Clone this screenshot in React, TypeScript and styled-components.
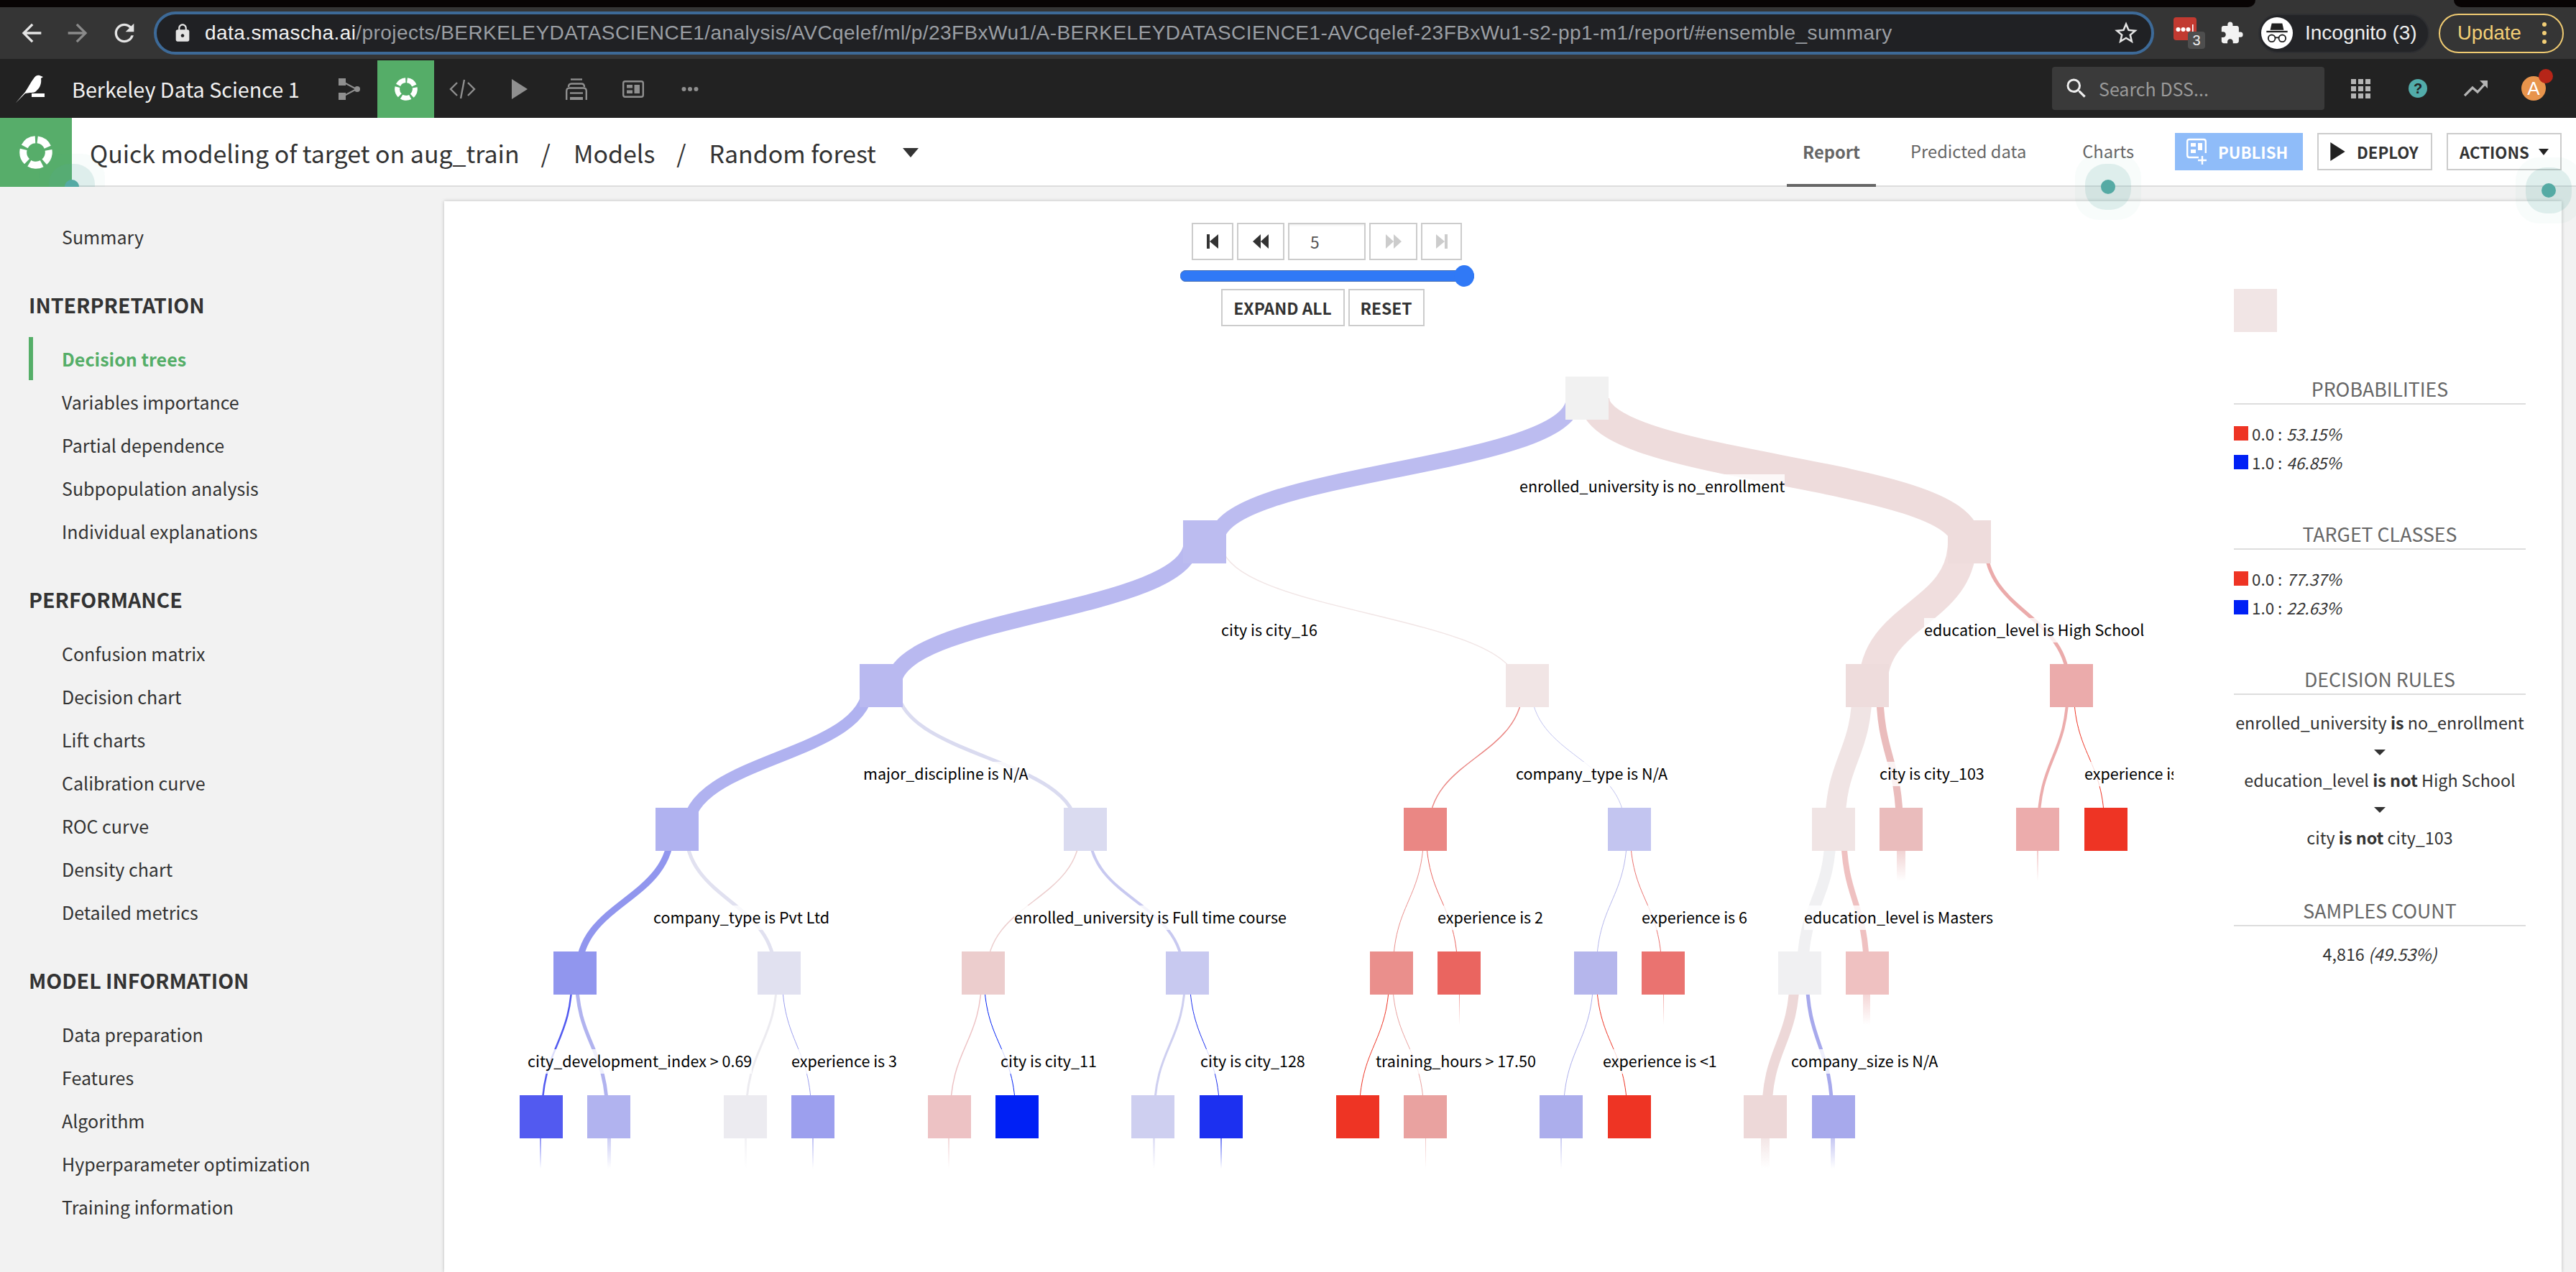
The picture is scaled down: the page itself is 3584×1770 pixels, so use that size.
import React from 'react';
import styled, { createGlobalStyle } from 'styled-components';
import { MdArrowBack, MdArrowForward, MdRefresh, MdLock, MdStarBorder, MdExtension, MdSearch } from 'react-icons/md';

const SANS = `"Noto Sans CJK SC", "Noto Sans", sans-serif`;
const CHROME = `"Liberation Sans", Arial, sans-serif`;

// the tree is a free canvas, coordinates below are page coordinates minus this origin
const ORIGIN_X = 618;
const ORIGIN_Y = 280;
const LEVEL_Y = [524, 724, 924, 1124, 1324, 1524];

const GlobalStyle = createGlobalStyle`
  html, body {
    margin: 0;
    padding: 0;
    width: 3584px;
    height: 1770px;
    overflow: hidden;
    background: #f2f2f2;
  }
  * { box-sizing: border-box; }
`;

const Page = styled.div`
  width: 3584px;
  height: 1770px;
  display: flex;
  flex-direction: column;
  font-family: ${SANS};
  overflow: hidden;
`;

/* browser chrome */
const TabStrip = styled.div`
  height: 10px;
  background: #353535;
  display: flex;
  justify-content: space-between;
`;

const TabGap = styled.div<{ $side: 'left' | 'right' }>`
  background: #080404;
  width: ${p => (p.$side === 'left' ? '3138px' : '170px')};
  border-radius: ${p => (p.$side === 'left' ? '0 0 10px 0' : '0 0 0 10px')};
`;

const Toolbar = styled.div`
  height: 72px;
  background: #353535;
  display: flex;
  align-items: center;
  padding-left: 24px;
  color: #e6e6e6;
`;

const ToolIcon = styled.span<{ $dim?: boolean; $mr: number }>`
  display: flex;
  margin-right: ${p => p.$mr}px;
  color: ${p => (p.$dim ? '#8a8a8a' : '#e4e4e4')};
`;

const UrlBar = styled.div`
  width: 2783px;
  height: 60px;
  border: 4px solid #3d6a98;
  border-radius: 30px;
  background: #202124;
  display: flex;
  align-items: center;
  padding: 0 16px 0 22px;
  margin-right: 27px;
  color: #e4e4e4;
`;

const UrlText = styled.div`
  flex: 1;
  margin-left: 17px;
  font-family: ${CHROME};
  font-size: 28px;
  letter-spacing: 0.43px;
  white-space: nowrap;
  color: #9a9ea3;

  b {
    font-weight: 400;
    color: #f1f1f1;
  }
`;

const ExtBox = styled.div`
  position: relative;
  width: 32px;
  height: 32px;
  margin: -12px 32px 0 0;
  border-radius: 4px;
  background: #c23a31;
  display: flex;
  align-items: center;
  padding-left: 3px;
`;

const ExtBadge = styled.span`
  position: absolute;
  left: 20px;
  top: 20px;
  width: 24px;
  height: 24px;
  border-radius: 4px;
  background: #4e4e4e;
  color: #eee;
  font: 400 20px/24px ${CHROME};
  text-align: center;
`;

const IncognitoPill = styled.div`
  width: 238px;
  height: 55px;
  margin: 0 13px 0 20px;
  border-radius: 28px;
  background: #232427;
  border: 2px solid #2e2f32;
  display: flex;
  align-items: center;
  padding-left: 2px;
  gap: 17px;
  font: 400 28px ${CHROME};
  color: #eee;
  white-space: nowrap;
`;

const UpdatePill = styled.div`
  width: 174px;
  height: 55px;
  border-radius: 28px;
  border: 2px solid #f0cb72;
  display: flex;
  align-items: center;
  padding: 0 22px 0 24px;
  justify-content: space-between;
  font: 400 27.5px ${CHROME};
  color: #f3cf76;
`;

const KebabDots = styled.span`
  display: flex;
  flex-direction: column;
  gap: 6px;

  i {
    width: 6px;
    height: 6px;
    border-radius: 50%;
    background: #f3cf76;
  }
`;

/* app nav */
const NavBar = styled.div`
  height: 82px;
  background: #222;
  display: flex;
  align-items: center;
  padding-right: 42px;
`;

const Brand = styled.div`
  width: 446px;
  display: flex;
  align-items: center;
  padding-left: 20px;
  color: #f2f2f2;
  font-size: 28.75px;
  white-space: nowrap;
  gap: 38px;
`;

const NavTab = styled.div<{ $active?: boolean }>`
  width: 79px;
  height: 80px;
  align-self: flex-end;
  display: flex;
  align-items: center;
  justify-content: center;
  background: ${p => (p.$active ? '#55ad68' : 'transparent')};
  color: #8f8f8f;
`;

const SearchBox = styled.div`
  width: 379px;
  height: 60px;
  margin-left: auto;
  margin-right: 37px;
  background: #3a3a3a;
  border-radius: 4px;
  display: flex;
  align-items: center;
  padding-left: 16px;
  gap: 13px;
  color: #eee;
  font-size: 25px;

  span {
    color: #9a9a9a;
  }
`;

const AppGrid = styled.div`
  display: grid;
  grid-template-columns: repeat(3, 7px);
  grid-auto-rows: 7px;
  gap: 3px;
  margin-right: 53px;

  i {
    background: #b5b5b5;
  }
`;

const HelpDot = styled.div`
  width: 26px;
  height: 26px;
  border-radius: 50%;
  background: #52acaa;
  color: #222;
  font: 700 20px/26px ${CHROME};
  text-align: center;
  margin-right: 51px;
`;

const Avatar = styled.div`
  position: relative;
  width: 34px;
  height: 34px;
  margin-left: 46px;
  border-radius: 50%;
  background: #e8944c;
  color: #fff;
  text-align: center;
  font: 400 26px/34px ${CHROME};
`;

const AvatarDot = styled.span`
  position: absolute;
  left: 24px;
  top: -10px;
  width: 20px;
  height: 20px;
  border-radius: 50%;
  background: #b62518;
`;

/* page header */
const Header = styled.div`
  height: 96px;
  background: #fff;
  display: flex;
  align-items: center;
  padding-right: 20px;
  border-bottom: 2px solid #ddd;
  position: relative;
  z-index: 3;
`;

const Crumbs = styled.div`
  flex: 1;
  height: 96px;
  margin-bottom: -2px;
  align-self: flex-start;
  position: relative;
  overflow: hidden;
  display: flex;
  align-items: center;
  color: #333;
  font-size: 33.9px;
  white-space: nowrap;
`;

const Tile = styled.div`
  width: 100px;
  height: 96px;
  background: #57ad6a;
  display: flex;
  align-items: center;
  justify-content: center;
  margin-right: 25px;
`;

const Slash = styled.span`
  margin: 0 32px 0 30px;
`;

const CrumbCaret = styled.span`
  width: 0;
  height: 0;
  margin-left: 37px;
  border-left: 11px solid transparent;
  border-right: 11px solid transparent;
  border-top: 13px solid #333;
`;

const HeadTab = styled.div<{ $active?: boolean }>`
  position: relative;
  height: ${p => (p.$active ? '96px' : '94px')};
  padding: ${p => (p.$active ? '4px 22px 2px' : '0 24px 2px')};
  margin-right: ${p => (p.$active ? '24px' : '30px')};
  margin-bottom: ${p => (p.$active ? '-2px' : '0')};
  display: flex;
  align-items: center;
  font-size: 23.7px;
  font-weight: ${p => (p.$active ? 600 : 400)};
  color: #666;
  border-bottom: ${p => (p.$active ? '4px solid #666' : 'none')};
`;

const ActionBtn = styled.div<{ $w: number; $primary?: boolean }>`
  position: relative;
  width: ${p => p.$w}px;
  height: 52px;
  margin-left: ${p => (p.$primary ? '3px' : '20px')};
  display: flex;
  align-items: center;
  gap: 16px;
  padding-left: 16px;
  font-size: 22.2px;
  font-weight: 600;
  background: ${p => (p.$primary ? '#8fbcf9' : '#fff')};
  color: ${p => (p.$primary ? '#fff' : '#333')};
  border: ${p => (p.$primary ? 'none' : '2px solid #ccc')};
`;

const SmallCaret = styled.span`
  width: 0;
  height: 0;
  margin-left: -3px;
  border-left: 7px solid transparent;
  border-right: 7px solid transparent;
  border-top: 9px solid #222;
`;

const Cue = styled.span<{ $x: string; $y: number }>`
  position: absolute;
  left: ${p => p.$x};
  top: ${p => p.$y}px;
  width: 20px;
  height: 20px;
  margin: -10px 0 0 -10px;
  border-radius: 50%;
  background: #55aaa4;
  box-shadow: 0 0 0 22px rgba(85, 170, 164, 0.16), 0 0 0 36px rgba(85, 170, 164, 0.04);
  z-index: 5;
`;

/* body */
const Body = styled.div`
  flex: 1;
  display: flex;
  min-height: 0;
  background: #f2f2f2;
`;

const Sidebar = styled.div`
  width: 618px;
  padding: 39px 0 0 40px;
  color: #333;
`;

const SideItem = styled.div<{ $active?: boolean }>`
  height: 60px;
  line-height: 60px;
  font-size: 25px;
  padding-left: ${p => (p.$active ? '40px' : '46px')};
  white-space: nowrap;
  font-weight: ${p => (p.$active ? 700 : 400)};
  color: ${p => (p.$active ? '#55ae68' : '#333')};
  border-left: ${p => (p.$active ? '6px solid #55ae68' : 'none')};
`;

const SideTitle = styled.div`
  height: 38px;
  line-height: 38px;
  margin: 46px 0 26px;
  font-size: 28.5px;
  font-weight: 700;
  color: #333;
`;

const Card = styled.div`
  flex: 1;
  margin: 20px 20px 0 0;
  background: #fff;
  box-shadow: 0 0 5px rgba(0, 0, 0, 0.22);
  display: flex;
`;

const TreeArea = styled.div`
  position: relative;
  width: 2406px;
  height: 100%;
  overflow: hidden;
`;

const Controls = styled.div`
  position: relative;
  z-index: 2;
  padding: 30px 0 0 50px;
  display: flex;
  flex-direction: column;
  align-items: center;
`;

const ControlRow = styled.div<{ $shift?: number }>`
  display: flex;
  gap: 5px;
  margin-right: ${p => p.$shift || 0}px;
`;

const GhostBtn = styled.div<{ $w: number }>`
  width: ${p => p.$w}px;
  height: 52px;
  border: 2px solid #ccc;
  background: #fff;
  display: flex;
  align-items: center;
  justify-content: center;
  color: #333;
  font-size: 22.8px;
  font-weight: 600;
  white-space: nowrap;
`;

const PageInput = styled(GhostBtn)`
  justify-content: flex-start;
  padding-left: 29px;
  font-weight: 400;
  color: #555;
  box-shadow: inset 0 3px 3px -2px rgba(0, 0, 0, 0.1);
`;

const Slider = styled.div`
  position: relative;
  width: 409px;
  height: 16px;
  margin: 14px 0 10px;
  border-radius: 8px;
  background: #3079f6;
  box-shadow: inset 0 1px 0 #4b72b4, inset 0 -1px 0 #4b72b4;
`;

const SliderThumb = styled.span`
  position: absolute;
  right: 0;
  top: -7px;
  width: 28px;
  height: 30px;
  border-radius: 50%;
  background: #3079f6;
`;

const TreeEdges = styled.svg`
  position: absolute;
  left: 0;
  top: 0;
`;

const Node = styled.div<{ $x: number; $y: number; $color: string }>`
  position: absolute;
  left: ${p => p.$x - ORIGIN_X}px;
  top: ${p => p.$y - ORIGIN_Y}px;
  width: 60px;
  height: 60px;
  background: ${p => p.$color};
`;

const Stub = styled.div<{ $x: number; $y: number; $w: number; $color: string }>`
  position: absolute;
  left: ${p => p.$x - ORIGIN_X - p.$w / 2}px;
  top: ${p => p.$y - ORIGIN_Y}px;
  width: ${p => p.$w}px;
  height: 42px;
  opacity: 0.65;
  background: linear-gradient(${p => p.$color}, rgba(255, 255, 255, 0));
`;

const TreeLabel = styled.div<{ $x: number; $y: number }>`
  position: absolute;
  left: ${p => p.$x - ORIGIN_X}px;
  top: ${p => p.$y - ORIGIN_Y - 17}px;
  height: 34px;
  line-height: 32px;
  font-size: 21.5px;
  color: #000;
  white-space: nowrap;
  background: rgba(255, 255, 255, 0.8);
`;

/* right panel */
const Panel = styled.div`
  width: 406px;
  margin-left: 84px;
  padding-top: 122px;
  color: #333;
  font-size: 23.3px;
`;

const PanelSwatch = styled.div`
  width: 60px;
  height: 60px;
  background: #f1e5e5;
  margin-bottom: 61px;
`;

const PanelSection = styled.div<{ $mb: number }>`
  margin-bottom: ${p => p.$mb}px;
`;

const PanelTitle = styled.div`
  height: 40px;
  line-height: 36px;
  text-align: center;
  font-size: 26.7px;
  color: #666;
  border-bottom: 2px solid #ddd;
  text-transform: uppercase;
  margin-bottom: 20px;
`;

const LegendRow = styled.div`
  height: 40px;
  display: flex;
  align-items: center;
  font-size: 22.4px;
  gap: 5px;

  em {
    font-style: italic;
    margin-left: 1px;
  }
`;

const LegendSwatch = styled.span<{ $color: string }>`
  width: 20px;
  height: 20px;
  background: ${p => p.$color};
`;

const RuleText = styled.div`
  height: 40px;
  line-height: 36px;
  text-align: center;
  white-space: nowrap;

  b {
    font-weight: 700;
  }
`;

const RuleCaret = styled.div`
  width: 0;
  height: 0;
  margin: 0 auto;
  border-left: 8px solid transparent;
  border-right: 8px solid transparent;
  border-top: 8px solid #333;
`;

const RuleGap = styled.div`
  height: 40px;
  display: flex;
  align-items: center;
`;

const CountText = styled.div`
  text-align: center;
  height: 40px;
  line-height: 36px;

  em {
    font-style: italic;
  }
`;

/* icons */
const RingIcon = ({ size, color = '#fff' }: { size: number; color?: string }) => (
  <svg width={size} height={size} viewBox="0 0 44 44">
    <circle
      cx="22"
      cy="22"
      r="17"
      fill="none"
      stroke={color}
      strokeWidth="9.5"
      strokeDasharray="17.4 4"
      transform="rotate(-83 22 22)"
    />
  </svg>
);

const BirdIcon = () => (
  <svg width="42" height="42" viewBox="18 6 42 42">
    <path
      d="M20 47 L33 32 C37 26 41 18 45 13 C47 9 51 8 53 9 C55 10 56 10 58 11 L55 13 C56 19 54 26 49 30 C47 33 43 33 40 33 L33 34 Z"
      fill="#fff"
    />
    <rect x="42" y="34" width="18" height="5" fill="#fff" />
  </svg>
);

const FlowIcon = () => (
  <svg width="30" height="30" viewBox="0 0 30 30" fill="currentColor" stroke="currentColor">
    <rect x="0" y="0" width="10" height="10" stroke="none" />
    <rect x="0" y="20" width="10" height="10" stroke="none" />
    <circle cx="26" cy="15" r="4" stroke="none" />
    <path d="M8 6 L25 15 L8 24" fill="none" strokeWidth="2" />
  </svg>
);

const CodeIcon = () => (
  <svg width="37" height="30" viewBox="0 0 37 30" fill="none" stroke="currentColor" strokeWidth="2.4">
    <path d="M11 6 L2 15 L11 24" />
    <path d="M26 6 L35 15 L26 24" />
    <path d="M21 2 L16 28" />
  </svg>
);

const PlayIcon = ({ w = 22, h = 28, color = 'currentColor' }: { w?: number; h?: number; color?: string }) => (
  <svg width={w} height={h} viewBox="0 0 22 28">
    <path d="M0 0 L22 14 L0 28 Z" fill={color} />
  </svg>
);

const StackIcon = () => (
  <svg width="30" height="30" viewBox="0 0 30 30" fill="none" stroke="currentColor" strokeWidth="2.4">
    <path d="M7 1.5 H23" />
    <path d="M4 12 Q4 7.5 8 7.5 H22 Q26 7.5 26 12" />
    <path d="M1.2 30 V18 Q1.2 13.5 5 13.5 H25 Q28.8 13.5 28.8 18 V30" />
    <path d="M6 20.5 H24" />
    <path d="M6 28 H24" strokeWidth="4" />
  </svg>
);

const BoardIcon = () => (
  <svg width="30" height="24" viewBox="0 0 30 24">
    <rect x="1.2" y="1.2" width="27.6" height="21.6" rx="2.5" fill="none" stroke="currentColor" strokeWidth="2.4" />
    <rect x="6" y="6" width="8" height="4.5" fill="currentColor" />
    <rect x="6" y="13.5" width="8" height="4.5" fill="currentColor" />
    <rect x="16.5" y="6" width="7.5" height="12" fill="currentColor" />
  </svg>
);

const DotsIcon = () => (
  <svg width="24" height="8" viewBox="0 0 24 8" fill="currentColor">
    <circle cx="3.5" cy="4" r="3" />
    <circle cx="12" cy="4" r="3" />
    <circle cx="20.5" cy="4" r="3" />
  </svg>
);

const TrendIcon = () => (
  <svg width="34" height="24" viewBox="0 0 34 24" fill="none" stroke="#b5b5b5" strokeWidth="3.2">
    <path d="M1 22 L12 11 L19 17 L31 4" />
    <path d="M22 1 L33 1 L33 12 Z" fill="#b5b5b5" stroke="none" />
  </svg>
);

const IncognitoIcon = () => (
  <svg width="44" height="44" viewBox="0 0 42 42">
    <circle cx="21" cy="21" r="21" fill="#fff" />
    <path d="M14 8 H28 L30 17 H12 Z" fill="#222" />
    <rect x="7" y="18" width="28" height="2.2" fill="#222" />
    <circle cx="14" cy="28" r="4.6" fill="none" stroke="#222" strokeWidth="1.8" />
    <circle cx="28" cy="28" r="4.6" fill="none" stroke="#222" strokeWidth="1.8" />
    <path d="M18.5 27 H23.5" stroke="#222" strokeWidth="1.8" />
  </svg>
);

const LastPassMark = () => (
  <svg width="26" height="14" viewBox="0 0 26 14" fill="#fff">
    <circle cx="3.5" cy="8" r="3" />
    <circle cx="10.5" cy="8" r="3" />
    <circle cx="17.5" cy="8" r="3" />
    <rect x="23" y="1" width="1.6" height="12" />
  </svg>
);

const PublishIcon = () => (
  <svg width="28" height="38" viewBox="0 0 28 38" fill="none" stroke="#fff" strokeWidth="2.4">
    <path d="M17 27 H4 Q1.2 27 1.2 24 V5 Q1.2 2 4 2 H24 Q26.8 2 26.8 5 V21" />
    <rect x="6" y="7" width="7" height="5" fill="#fff" stroke="none" />
    <rect x="6" y="16" width="7" height="5" fill="#fff" stroke="none" />
    <rect x="16" y="7" width="6" height="10" fill="#fff" stroke="none" />
    <path d="M22 25 V37 M16 31 H28" />
  </svg>
);

const StepIcon = ({ dir, bar, color }: { dir: 'prev' | 'next'; bar: boolean; color: string }) => (
  <svg width="24" height="24" viewBox="0 0 24 24" fill={color} transform={dir === 'next' ? 'scale(-1 1)' : undefined}>
    {bar ? (
      <>
        <rect x="4" y="2" width="4" height="20" />
        <path d="M20 2 V22 L8 12 Z" />
      </>
    ) : (
      <>
        <path d="M12 2 V22 L1 12 Z" />
        <path d="M23 2 V22 L12 12 Z" />
      </>
    )}
  </svg>
);

/* tree data, all in page coordinates: [x, level, color] */
const NODES: [number, number, string][] = [
  [2178, 0, '#f1f1f1'],
  [1646, 1, '#bcbcf0'], [2710, 1, '#eedcdc'],
  [1196, 2, '#b9b9f0'], [2095, 2, '#f1e5e5'], [2568, 2, '#eedcdc'], [2852, 2, '#ebabab'],
  [912, 3, '#b0b2f0'], [1480, 3, '#dadbf0'], [1953, 3, '#ea8784'], [2237, 3, '#c3c5f0'],
  [2521, 3, '#f0e4e4'], [2615, 3, '#eabcbc'], [2805, 3, '#ecacac'], [2900, 3, '#ee3424'],
  [770, 4, '#9196ee'], [1054, 4, '#e1e1f0'], [1338, 4, '#eccdcd'], [1622, 4, '#c8c9f0'],
  [1906, 4, '#ea8f8c'], [2000, 4, '#ea6560'], [2190, 4, '#b5b6ec'], [2284, 4, '#ea7370'],
  [2474, 4, '#f0f0f2'], [2568, 4, '#efc1c1'],
  [723, 5, '#525af0'], [817, 5, '#b1b3ef'], [1007, 5, '#ecebf0'], [1101, 5, '#9c9fee'],
  [1291, 5, '#edc2c4'], [1385, 5, '#0020f5'], [1574, 5, '#cecff0'], [1669, 5, '#1c30f0'],
  [1859, 5, '#ee3424'], [1953, 5, '#e9a2a0'], [2142, 5, '#acaeec'], [2237, 5, '#ee3424'],
  [2426, 5, '#edd8d8'], [2521, 5, '#a7a9ec'],
];

/* [start x, end x, parent level, width, color] */
const EDGES: [number, number, number, number, string][] = [
  [2190, 1692, 0, 22, '#bcbcf0'], [2218, 2735, 0, 42, '#eedcdc'],
  [1658, 1243, 1, 22, '#b9b9f0'], [1699, 2111, 1, 1.5, '#f1e5e5'],
  [2730, 2606, 1, 40, '#f0dede'], [2762, 2878, 1, 5, '#ebabab'],
  [1208, 957, 2, 16, '#b0b2f0'], [1248, 1498, 2, 5, '#dadbf0'],
  [2119, 1988, 2, 1.5, '#ea8784'], [2130, 2261, 2, 1, '#c3c5f0'],
  [2591, 2553, 2, 28, '#f0e4e4'], [2615, 2643, 2, 10, '#eabcbc'],
  [2877, 2836, 2, 4, '#ecacac'], [2885, 2928, 2, 1, '#ee3424'],
  [934, 805, 3, 9, '#9196ee'], [954, 1078, 3, 5, '#e1e1f0'],
  [1503, 1373, 3, 1.5, '#eccdcd'], [1515, 1646, 3, 4, '#c8c9f0'],
  [1981, 1938, 3, 1, '#ea8f8c'], [1984, 2028, 3, 1, '#ea6560'],
  [2264, 2221, 3, 1, '#b5b6ec'], [2268, 2312, 3, 1, '#ea7370'],
  [2547, 2508, 3, 16, '#f0f0f2'], [2565, 2597, 3, 8, '#efc1c1'],
  [796, 754, 4, 2.5, '#525af0'], [802, 845, 4, 5, '#b1b3ef'],
  [1081, 1038, 4, 3, '#ecebf0'], [1088, 1129, 4, 1, '#9c9fee'],
  [1366, 1322, 4, 1.5, '#edc2c4'], [1369, 1413, 4, 1, '#0020f5'],
  [1649, 1606, 4, 3, '#cecff0'], [1655, 1697, 4, 1, '#1c30f0'],
  [1933, 1891, 4, 1, '#ee3424'], [1937, 1981, 4, 1, '#e9a2a0'],
  [2217, 2175, 4, 1, '#acaeec'], [2221, 2264, 4, 1, '#ee3424'],
  [2497, 2458, 4, 14, '#edd8d8'], [2514, 2549, 4, 5, '#a7a9ec'],
];

/* [x, level the stub hangs from, width, color] */
const STUBS: [number, number, number, string][] = [
  [2645, 3, 12, '#eabcbc'], [2835, 3, 2, '#ecacac'],
  [2030, 4, 1, '#ea6560'], [2314, 4, 1, '#ea7370'], [2597, 4, 10, '#efc1c1'],
  [752, 5, 2, '#525af0'], [847, 5, 5, '#b1b3ef'], [1037, 5, 3, '#ecebf0'], [1131, 5, 2, '#9c9fee'],
  [1320, 5, 2, '#edc2c4'], [1605, 5, 3, '#cecff0'], [1699, 5, 2, '#1c30f0'], [1983, 5, 1, '#e9a2a0'],
  [2172, 5, 2, '#acaeec'], [2456, 5, 12, '#edd8d8'], [2550, 5, 6, '#a7a9ec'],
];

const LABELS: [number, number, string][] = [
  [2114, 677, 'enrolled_university is no_enrollment'],
  [1699, 877, 'city is city_16'],
  [2677, 877, 'education_level is High School'],
  [1201, 1077, 'major_discipline is N/A'],
  [2109, 1077, 'company_type is N/A'],
  [2615, 1077, 'city is city_103'],
  [2900, 1077, 'experience is 5'],
  [909, 1277, 'company_type is Pvt Ltd'],
  [1411, 1277, 'enrolled_university is Full time course'],
  [2000, 1277, 'experience is 2'],
  [2284, 1277, 'experience is 6'],
  [2510, 1277, 'education_level is Masters'],
  [734, 1477, 'city_development_index > 0.69'],
  [1101, 1477, 'experience is 3'],
  [1392, 1477, 'city is city_11'],
  [1670, 1477, 'city is city_128'],
  [1914, 1477, 'training_hours > 17.50'],
  [2230, 1477, 'experience is <1'],
  [2492, 1477, 'company_size is N/A'],
];

const edgePath = (x0: number, x1: number, level: number) => {
  const y0 = LEVEL_Y[level] + 30;
  const y1 = LEVEL_Y[level + 1] + 30;
  const mid = (y0 + y1) / 2;
  return `M${x0} ${y0} C${x0} ${mid} ${x1} ${mid} ${x1} ${y1}`;
};

const SECTIONS = [
  { title: 'INTERPRETATION', items: ['Decision trees', 'Variables importance', 'Partial dependence', 'Subpopulation analysis', 'Individual explanations'] },
  { title: 'PERFORMANCE', items: ['Confusion matrix', 'Decision chart', 'Lift charts', 'Calibration curve', 'ROC curve', 'Density chart', 'Detailed metrics'] },
  { title: 'MODEL INFORMATION', items: ['Data preparation', 'Features', 'Algorithm', 'Hyperparameter optimization', 'Training information'] },
];

const App = () => (
  <Page>
    <GlobalStyle />
    <TabStrip>
      <TabGap $side="left" />
      <TabGap $side="right" />
    </TabStrip>
    <Toolbar>
      <ToolIcon $mr={24}><MdArrowBack size={40} /></ToolIcon>
      <ToolIcon $mr={25} $dim><MdArrowForward size={40} /></ToolIcon>
      <ToolIcon $mr={21}><MdRefresh size={40} /></ToolIcon>
      <UrlBar>
        <MdLock size={28} />
        <UrlText>
          <b>data.smascha.ai</b>/projects/BERKELEYDATASCIENCE1/analysis/AVCqelef/ml/p/23FBxWu1/A-BERKELEYDATASCIENCE1-AVCqelef-23FBxWu1-s2-pp1-m1/report/#ensemble_summary
        </UrlText>
        <MdStarBorder size={38} />
      </UrlBar>
      <ExtBox>
        <LastPassMark />
        <ExtBadge>3</ExtBadge>
      </ExtBox>
      <MdExtension size={34} color="#f2f2f2" />
      <IncognitoPill>
        <IncognitoIcon />
        Incognito (3)
      </IncognitoPill>
      <UpdatePill>
        Update
        <KebabDots><i /><i /><i /></KebabDots>
      </UpdatePill>
    </Toolbar>

    <NavBar>
      <Brand>
        <BirdIcon />
        Berkeley Data Science 1
      </Brand>
      <NavTab><FlowIcon /></NavTab>
      <NavTab $active><RingIcon size={32} /></NavTab>
      <NavTab><CodeIcon /></NavTab>
      <NavTab><PlayIcon /></NavTab>
      <NavTab><StackIcon /></NavTab>
      <NavTab><BoardIcon /></NavTab>
      <NavTab><DotsIcon /></NavTab>
      <SearchBox>
        <MdSearch size={36} />
        <span>Search DSS...</span>
      </SearchBox>
      <AppGrid>{Array.from({ length: 9 }, (_, i) => <i key={i} />)}</AppGrid>
      <HelpDot>?</HelpDot>
      <TrendIcon />
      <Avatar>
        A
        <AvatarDot />
      </Avatar>
    </NavBar>

    <Header>
      <Crumbs>
        <Tile><RingIcon size={46} /></Tile>
        Quick modeling of target on aug_train
        <Slash>/</Slash>
        Models
        <Slash>/</Slash>
        Random forest
        <CrumbCaret />
        <Cue $x="100px" $y={96} />
      </Crumbs>
      <HeadTab $active>Report</HeadTab>
      <HeadTab>Predicted data</HeadTab>
      <HeadTab>
        Charts
        <Cue $x="50%" $y={96} />
      </HeadTab>
      <ActionBtn $w={178} $primary>
        <PublishIcon />
        PUBLISH
      </ActionBtn>
      <ActionBtn $w={160}>
        <PlayIcon w={21} h={26} color="#222" />
        DEPLOY
      </ActionBtn>
      <ActionBtn $w={160}>
        ACTIONS
        <SmallCaret />
        <Cue $x="140px" $y={78} />
      </ActionBtn>
    </Header>

    <Body>
      <Sidebar>
        <SideItem>Summary</SideItem>
        {SECTIONS.map(section => (
          <div key={section.title}>
            <SideTitle>{section.title}</SideTitle>
            {section.items.map(item => (
              <SideItem key={item} $active={item === 'Decision trees'}>{item}</SideItem>
            ))}
          </div>
        ))}
      </Sidebar>

      <Card>
        <TreeArea>
          <TreeEdges width="2406" height="1490" viewBox={`${ORIGIN_X} ${ORIGIN_Y} 2406 1490`}>
            {EDGES.map(([x0, x1, level, width, color]) => (
              <path
                key={`${x0}-${x1}`}
                d={edgePath(x0, x1, level)}
                fill="none"
                stroke={color}
                strokeWidth={width}
              />
            ))}
          </TreeEdges>
          {STUBS.map(([x, level, width, color]) => (
            <Stub key={x} $x={x} $y={LEVEL_Y[level] + 60} $w={width} $color={color} />
          ))}
          {NODES.map(([x, level, color]) => (
            <Node key={`${x}-${level}`} $x={x} $y={LEVEL_Y[level]} $color={color} />
          ))}
          {LABELS.map(([x, y, text]) => (
            <TreeLabel key={text + x} $x={x} $y={y}>{text}</TreeLabel>
          ))}
          <Controls>
            <ControlRow>
              <GhostBtn $w={58}><StepIcon dir="prev" bar color="#333" /></GhostBtn>
              <GhostBtn $w={66}><StepIcon dir="prev" bar={false} color="#333" /></GhostBtn>
              <PageInput $w={108}>5</PageInput>
              <GhostBtn $w={67}><StepIcon dir="next" bar={false} color="#ccc" /></GhostBtn>
              <GhostBtn $w={57}><StepIcon dir="next" bar color="#ccc" /></GhostBtn>
            </ControlRow>
            <Slider><SliderThumb /></Slider>
            <ControlRow $shift={12}>
              <GhostBtn $w={172}>EXPAND ALL</GhostBtn>
              <GhostBtn $w={106}>RESET</GhostBtn>
            </ControlRow>
          </Controls>
        </TreeArea>

        <Panel>
          <PanelSwatch />
          <PanelSection $mb={62}>
            <PanelTitle>Probabilities</PanelTitle>
            <LegendRow><LegendSwatch $color="#ee3424" />0.0 : <em>53.15%</em></LegendRow>
            <LegendRow><LegendSwatch $color="#0020f5" />1.0 : <em>46.85%</em></LegendRow>
          </PanelSection>
          <PanelSection $mb={62}>
            <PanelTitle>Target classes</PanelTitle>
            <LegendRow><LegendSwatch $color="#ee3424" />0.0 : <em>77.37%</em></LegendRow>
            <LegendRow><LegendSwatch $color="#0020f5" />1.0 : <em>22.63%</em></LegendRow>
          </PanelSection>
          <PanelSection $mb={62}>
            <PanelTitle>Decision rules</PanelTitle>
            <RuleText>enrolled_university <b>is</b> no_enrollment</RuleText>
            <RuleGap><RuleCaret /></RuleGap>
            <RuleText>education_level <b>is not</b> High School</RuleText>
            <RuleGap><RuleCaret /></RuleGap>
            <RuleText>city <b>is not</b> city_103</RuleText>
          </PanelSection>
          <PanelSection $mb={0}>
            <PanelTitle>Samples count</PanelTitle>
            <CountText>4,816 <em>(49.53%)</em></CountText>
          </PanelSection>
        </Panel>
      </Card>
    </Body>
  </Page>
);

export default App;
